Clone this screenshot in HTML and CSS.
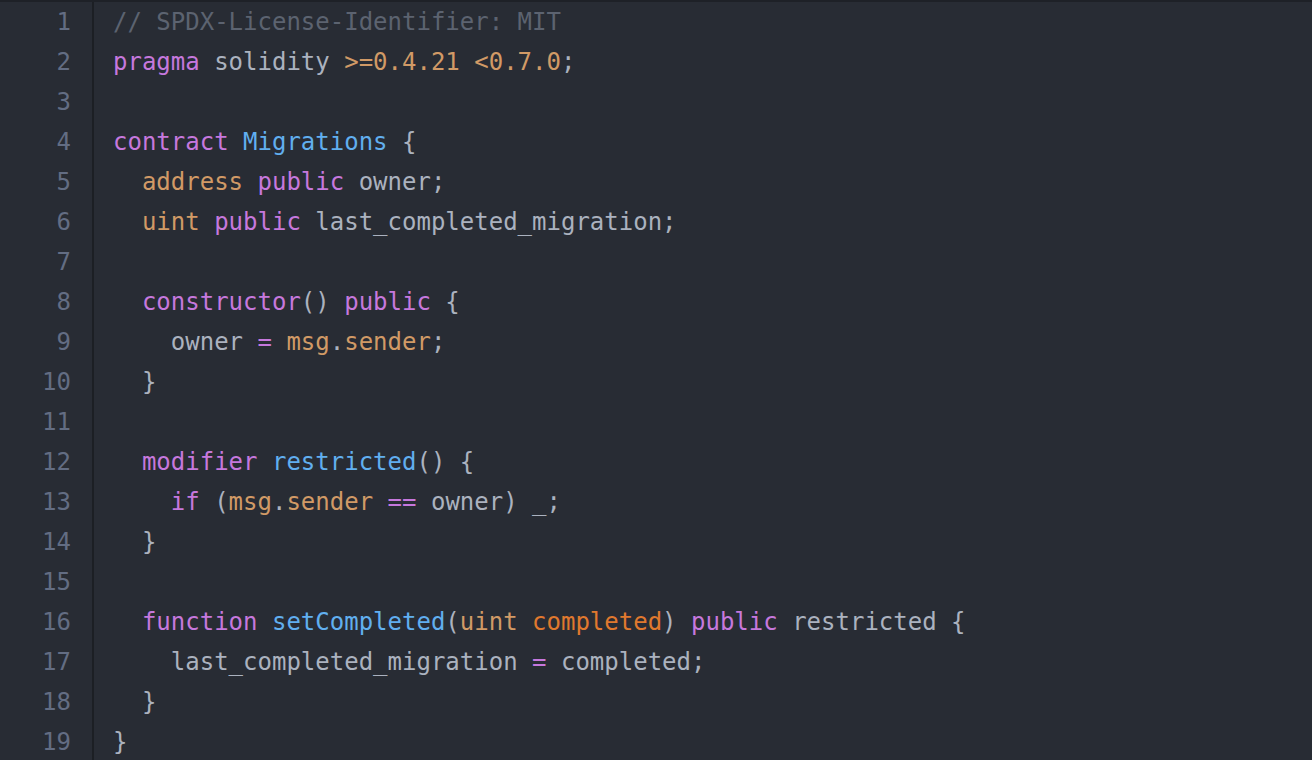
FILE: index.html
```html
<!DOCTYPE html>
<html>
<head>
<meta charset="utf-8">
<link rel="stylesheet" href="styles.css">
</head>
<body>
<div class="editor">
  <div class="gutter">
    <div class="ln">1</div><div class="ln">2</div><div class="ln">3</div><div class="ln">4</div><div class="ln">5</div><div class="ln">6</div><div class="ln">7</div><div class="ln">8</div><div class="ln">9</div><div class="ln">10</div><div class="ln">11</div><div class="ln">12</div><div class="ln">13</div><div class="ln">14</div><div class="ln">15</div><div class="ln">16</div><div class="ln">17</div><div class="ln">18</div><div class="ln">19</div>
  </div>
  <div class="code">
    <div class="line"><span class="c">// SPDX-License-Identifier: MIT</span></div>
    <div class="line"><span class="k">pragma</span> solidity <span class="t">&gt;=0.4.21</span> <span class="t">&lt;0.7.0</span>;</div>
    <div class="line"> </div>
    <div class="line"><span class="k">contract</span> <span class="f">Migrations</span> {</div>
    <div class="line">  <span class="t">address</span> <span class="k">public</span> owner;</div>
    <div class="line">  <span class="t">uint</span> <span class="k">public</span> last_completed_migration;</div>
    <div class="line"> </div>
    <div class="line">  <span class="k">constructor</span>() <span class="k">public</span> {</div>
    <div class="line">    owner <span class="k">=</span> <span class="t">msg</span>.<span class="t">sender</span>;</div>
    <div class="line">  }</div>
    <div class="line"> </div>
    <div class="line">  <span class="k">modifier</span> <span class="f">restricted</span>() {</div>
    <div class="line">    <span class="k">if</span> (<span class="t">msg</span>.<span class="t">sender</span> <span class="k">==</span> owner) _;</div>
    <div class="line">  }</div>
    <div class="line"> </div>
    <div class="line">  <span class="k">function</span> <span class="f">setCompleted</span>(<span class="t">uint</span> <span class="p">completed</span>) <span class="k">public</span> restricted {</div>
    <div class="line">    last_completed_migration <span class="k">=</span> completed;</div>
    <div class="line">  }</div>
    <div class="line">}</div>
  </div>
</div>
</body>
</html>
```
FILE: styles.css
```css
html, body {
  margin: 0;
  padding: 0;
  background: #282c34;
}
.editor {
  display: flex;
  width: 1312px;
  height: 760px;
  box-sizing: border-box;
  border-top: 2px solid #1e2127;
  background: #282c34;
  font-family: "DejaVu Sans Mono", "Liberation Mono", monospace;
  font-size: 24px;
  overflow: hidden;
}
.gutter {
  width: 94px;
  flex: none;
  box-sizing: border-box;
  border-right: 2px solid #1c1f24;
  padding-right: 21px;
  color: #636d83;
  text-align: right;
}
.ln {
  height: 40px;
  line-height: 40px;
}
.code {
  padding-left: 19px;
  color: #abb2bf;
}
.line {
  height: 40px;
  line-height: 40px;
  white-space: pre;
}
.c { color: #5c6370; }
.k { color: #c678dd; }
.t { color: #d19a66; }
.f { color: #61afef; }
.p { color: #e0792e; }
```
